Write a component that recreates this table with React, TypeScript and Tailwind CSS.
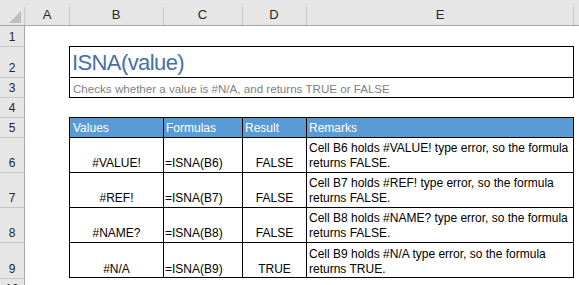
import React from 'react';

const cols = ['A', 'B', 'C', 'D', 'E'];

const rows = [
	{ value: '#VALUE!', formula: '=ISNA(B6)', result: 'FALSE', l1: 'Cell B6 holds #VALUE! type error, so the formula', l2: 'returns FALSE.' },
	{ value: '#REF!', formula: '=ISNA(B7)', result: 'FALSE', l1: 'Cell B7 holds #REF! type error, so the formula', l2: 'returns FALSE.' },
	{ value: '#NAME?', formula: '=ISNA(B8)', result: 'FALSE', l1: 'Cell B8 holds #NAME? type error, so the formula', l2: 'returns FALSE.' },
	{ value: '#N/A', formula: '=ISNA(B9)', result: 'TRUE', l1: 'Cell B9 holds #N/A type error, so the formula', l2: 'returns TRUE.' },
];

const RowHead = ({ n, first }: { n: number; first?: boolean }) => (
	<div
		className={`col-start-1 flex items-end justify-center pb-[1px] bg-[#e6e6e6] border-r border-r-[#a6a6a6] text-[#262626] leading-[15px] ${first ? '' : 'border-t border-t-[#c6c6c6]'}`}
	>
		{n}
	</div>
);

const App = () => {
	return (
		<div
			className="w-[579px] h-[285px] overflow-hidden bg-white text-[12px] text-black"
			style={{ fontFamily: '"Liberation Sans", Arial, sans-serif' }}
		>
			<div className="grid grid-cols-[25px_44px_94px_79px_64px_268px_1fr] grid-rows-[26px_20px_31px_20px_20px_20px_35px_35px_35px_36px_20px]">
				{/* column headers */}
				<div className="relative bg-[#e6e6e6] border-b border-b-[#a6a6a6]">
					<svg className="absolute left-[9px] top-[11px]" width="13" height="13" viewBox="0 0 13 13">
						<polygon points="12,0 12,12 0,12" fill="#bdbdbd" />
					</svg>
					<span className="absolute right-0 top-[7px] bottom-0 w-px bg-[#c6c6c6]" />
				</div>
				{cols.map((c) => (
					<div
						key={c}
						className="relative flex items-end justify-center bg-[#e6e6e6] border-b border-b-[#a6a6a6] text-[13px] leading-[17px] text-[#262626] pb-[2px]"
					>
						{c}
						{c !== 'A' && <span className="absolute left-0 top-[7px] bottom-0 w-px bg-[#c6c6c6]" />}
						{c === 'E' && <span className="absolute right-0 top-[7px] bottom-0 w-px bg-[#c6c6c6]" />}
					</div>
				))}
				<div className="bg-[#e6e6e6] border-b border-b-[#a6a6a6]" />

				{/* row 1 */}
				<RowHead n={1} first />
				<div className="col-span-6" />

				{/* row 2 title */}
				<RowHead n={2} />
				<div />
				<div className="col-span-4 flex items-end border-l border-t border-r border-black pl-[2px] pb-[1px]">
					<span className="text-[22px] leading-[26px] tracking-[-0.6px] text-[#4470aa]">ISNA(value)</span>
				</div>
				<div />

				{/* row 3 subtitle */}
				<RowHead n={3} />
				<div />
				<div className="col-span-4 flex items-end border-l border-t border-r border-black pl-[3px] pb-[1px] text-[11.6px] leading-[15px] text-[#808080] whitespace-nowrap">
					Checks whether a value is #N/A, and returns TRUE or FALSE
				</div>
				<div />

				{/* row 4 */}
				<RowHead n={4} />
				<div />
				<div className="col-span-4 border-t border-black" />
				<div />

				{/* row 5 table header */}
				<RowHead n={5} />
				<div />
				{['Values', 'Formulas', 'Result', 'Remarks'].map((h, i) => (
					<div
						key={h}
						className={`flex items-end bg-[#5b9bd5] text-white border-l border-t border-black leading-[15px] pb-[1px] ${i === 0 ? 'pl-[3px]' : 'pl-[2px]'} ${i === 3 ? 'border-r' : ''}`}
					>
						{h}
					</div>
				))}
				<div />

				{/* rows 6-9 */}
				{rows.map((r, i) => {
					const last = i === rows.length - 1;
					const b = `border-l border-t border-black ${last ? 'border-b' : ''}`;
					return (
						<React.Fragment key={r.formula}>
							<RowHead n={6 + i} />
							<div />
							<div className={`flex items-end justify-center leading-[15px] ${last ? 'pb-0' : 'pb-[1px]'} ${b}`}>{r.value}</div>
							<div className={`flex items-end pl-[1px] leading-[15px] ${last ? 'pb-0' : 'pb-[1px]'} ${b}`}>{r.formula}</div>
							<div className={`flex items-end justify-center leading-[15px] ${last ? 'pb-0' : 'pb-[1px]'} ${b}`}>{r.result}</div>
							<div className={`flex flex-col justify-end pl-[2px] leading-[15px] whitespace-nowrap border-r ${last ? 'pb-0' : 'pb-[1px]'} ${b}`}>
								<span>{r.l1}</span>
								<span>{r.l2}</span>
							</div>
							<div />
						</React.Fragment>
					);
				})}

				{/* row 10 */}
				<RowHead n={10} />
				<div className="col-span-6" />
			</div>
		</div>
	);
};

export default App;
